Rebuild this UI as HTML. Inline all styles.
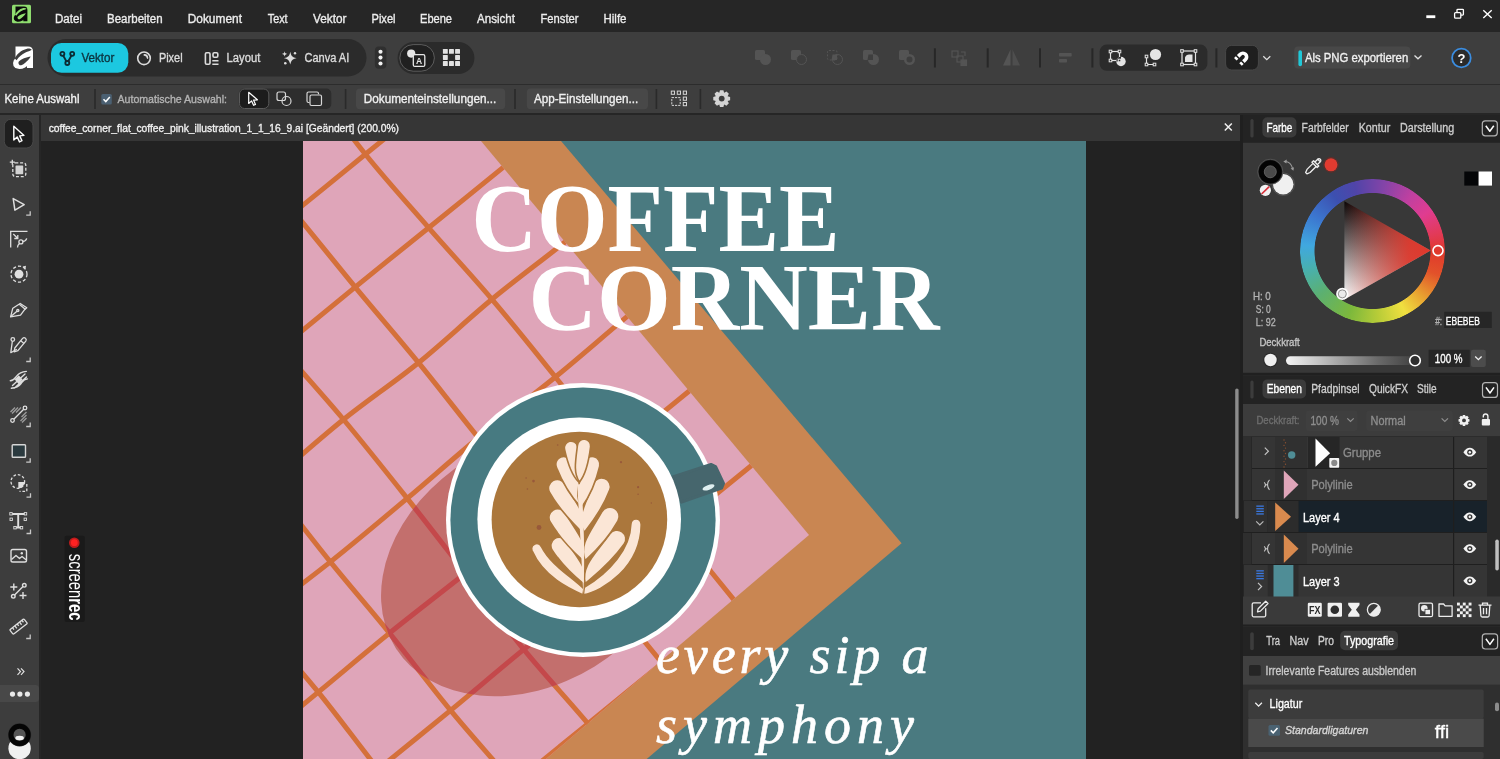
<!DOCTYPE html>
<html lang="de">
<head>
<meta charset="utf-8">
<title>coffee_corner_flat_coffee_pink_illustration</title>
<style>
*{box-sizing:border-box;margin:0;padding:0}
html,body{width:1500px;height:759px;overflow:hidden;background:#222;}
body{position:relative;font-family:"Liberation Sans","DejaVu Sans",sans-serif;font-size:12px;color:#e6e6e6;-webkit-font-smoothing:antialiased}
.abs{position:absolute}
svg{position:absolute;overflow:visible;will-change:transform}
.t{position:absolute;white-space:nowrap;line-height:1}
/* frames */
#menubar{left:0;top:0;width:1500px;height:32px;background:#262626}
#toolbar{left:0;top:32px;width:1500px;height:52px;background:#3e3e3e}
#ctxbar{left:0;top:84px;width:1500px;height:30px;background:#3e3e3e;border-top:1.5px solid #2c2c2c}
#ctxline{left:0;top:113px;width:1500px;height:2px;background:#262626}
#tools{left:0;top:115px;width:39px;height:644px;background:#3d3d3d}
#toolsline{left:39px;top:115px;width:2px;height:644px;background:#262626}
#tabbar{left:41px;top:115px;width:1199px;height:26px;background:#363636}
#canvas{left:41px;top:141px;width:1199px;height:618px;background:#222}
#rightline{left:1240px;top:115px;width:3px;height:644px;background:#1f1f1f}
#right{left:1243px;top:115px;width:257px;height:644px;background:#383838}
</style>
</head>
<body>
<div id="menubar" class="abs"></div>
<div id="toolbar" class="abs"></div>
<div id="ctxbar" class="abs"></div>
<div id="ctxline" class="abs"></div>
<div id="tools" class="abs"></div>
<div id="toolsline" class="abs"></div>
<div id="tabbar" class="abs"></div>
<div id="canvas" class="abs"></div>
<div id="rightline" class="abs"></div>
<div id="right" class="abs"></div>

<!-- ARTWORK -->
<svg id="art" class="abs" style="left:303px;top:141px" width="783" height="618" viewBox="303 141 783 618">
<defs>
<clipPath id="ab"><rect x="303" y="141" width="783" height="618"/></clipPath>
<clipPath id="pinkclip"><polygon points="303,141 481,141 809,535 546,759 303,759"/></clipPath>
<clipPath id="shclip"><ellipse cx="531" cy="563.4" rx="159.6" ry="121.1" transform="rotate(-31.7 531 563.4)"/></clipPath>
<g id="gl">
<path d="M242.7 754.6 C252.9 767.1 293.8 817.2 304.0 829.7"/>
<path d="M255.6 619.0 C266.1 631.2 297.9 667.0 318.3 692.1 C338.7 717.2 358.0 743.9 378.2 769.3 C398.4 794.7 429.3 831.9 439.5 844.5"/>
<path d="M207.2 408.2 C217.4 420.8 248.0 457.8 268.5 483.4 C289.1 509.0 310.2 536.9 330.4 561.9 C350.6 586.9 369.5 608.4 389.5 633.1 C409.5 657.9 429.9 685.2 450.6 710.4 C471.3 735.6 493.0 759.2 513.8 784.0 C534.5 808.8 564.9 846.7 575.1 859.2"/>
<path d="M220.1 272.7 C230.3 285.2 260.9 323.3 281.4 347.8 C302.0 372.3 322.5 394.4 343.5 419.5 C364.5 444.6 386.9 472.8 407.2 498.4 C427.5 524.0 445.9 548.1 465.4 573.3 C484.8 598.5 503.4 624.3 523.8 649.4 C544.2 674.5 567.1 698.7 588.0 723.6 C608.9 748.5 639.1 786.3 649.3 798.8"/>
<path d="M233.0 137.1 C243.2 149.6 274.0 187.2 294.3 212.2 C314.7 237.2 334.5 262.0 355.2 287.1 C375.9 312.2 398.0 337.6 418.5 362.7 C439.0 387.8 458.1 412.7 478.3 437.7 C498.4 462.8 519.1 487.8 539.6 512.9 C560.0 537.9 580.5 563.0 600.9 588.0 C621.3 613.1 641.8 638.1 662.2 663.2 C682.6 688.3 703.1 713.3 723.5 738.4 C743.9 763.4 774.6 801.0 784.8 813.5"/>
<path d="M307.2 76.7 C316.9 89.6 345.2 129.1 365.4 154.3 C385.6 179.5 407.6 203.6 428.7 227.8 C449.8 252.0 470.9 274.4 492.0 299.3 C513.1 324.2 535.1 351.5 555.4 377.0 C575.7 402.5 593.8 427.4 613.8 452.5 C633.8 477.6 654.7 502.6 675.1 527.6 C695.5 552.7 716.0 577.7 736.4 602.8 C756.9 627.8 777.3 652.9 797.7 677.9 C818.2 703.0 848.8 740.6 859.0 753.1"/>
<path d="M233.0 137.1 C245.4 127.0 294.9 86.7 307.2 76.7"/>
<path d="M220.1 272.7 C232.5 262.6 270.1 232.0 294.3 212.2 C318.6 192.5 340.7 174.4 365.4 154.3 C390.1 134.2 429.9 101.9 442.8 91.4"/>
<path d="M207.2 408.2 C219.6 398.2 256.8 368.0 281.4 347.8 C306.1 327.6 330.7 307.1 355.2 287.1 C379.7 267.1 403.9 247.9 428.7 227.8 C453.5 207.7 479.2 186.8 504.1 166.6 C529.0 146.3 553.6 126.3 578.3 106.1 C603.0 86.0 640.2 55.8 652.5 45.7"/>
<path d="M268.5 483.4 C281.0 472.8 318.5 439.6 343.5 419.5 C368.5 399.4 393.8 382.7 418.5 362.7 C443.2 342.7 467.5 319.5 492.0 299.3 C516.5 279.1 540.8 261.4 565.4 241.7 C590.0 222.1 614.9 201.4 639.6 181.3 C664.4 161.2 701.5 130.9 713.8 120.9"/>
<path d="M255.6 619.0 C268.1 609.5 305.1 582.0 330.4 561.9 C355.7 541.8 382.6 519.1 407.2 498.4 C431.8 477.7 453.6 458.0 478.3 437.7 C503.0 417.5 530.7 397.1 555.4 377.0 C580.1 356.9 602.5 337.0 626.7 316.9 C651.0 296.8 676.2 276.6 700.9 256.5 C725.7 236.3 762.8 206.1 775.1 196.0"/>
<path d="M242.7 754.6 C255.3 744.1 293.8 712.3 318.3 692.1 C342.8 671.9 365.0 652.9 389.5 633.1 C414.0 613.3 440.3 593.3 465.4 573.3 C490.4 553.3 514.8 533.0 539.6 512.9 C564.3 492.7 589.1 472.6 613.8 452.5 C638.5 432.3 663.3 412.2 688.0 392.0 C712.8 371.9 737.5 351.8 762.2 331.6 C787.0 311.5 824.1 281.3 836.5 271.2"/>
<path d="M304.0 829.7 C316.4 819.6 353.8 789.2 378.2 769.3 C402.7 749.4 426.3 730.4 450.6 710.4 C474.9 690.4 498.8 669.8 523.8 649.4 C548.8 629.0 575.7 608.3 600.9 588.0 C626.1 567.7 650.4 547.8 675.1 527.6 C699.9 507.5 724.6 487.3 749.3 467.2 C774.1 447.1 798.8 426.9 823.5 406.8 C848.3 386.6 885.4 356.4 897.8 346.4"/>
<path d="M439.5 844.5 C451.9 834.4 489.0 804.2 513.8 784.0 C538.5 763.9 563.2 743.8 588.0 723.6 C612.7 703.5 637.5 683.3 662.2 663.2 C686.9 643.1 711.7 622.9 736.4 602.8 C761.2 582.6 785.9 562.5 810.6 542.4 C835.4 522.2 872.5 492.0 884.9 481.9"/>
<path d="M575.1 859.2 C587.4 849.1 624.5 818.9 649.3 798.8 C674.0 778.6 698.8 758.5 723.5 738.4 C748.2 718.2 773.0 698.1 797.7 677.9 C822.5 657.8 859.6 627.6 872.0 617.5"/>
<path d="M784.8 813.5 C797.2 803.5 846.7 763.2 859.0 753.1"/>
</g>
</defs>
<g clip-path="url(#ab)">
<rect x="303" y="141" width="783" height="618" fill="#4a7a80"/>
<polygon points="303,141 561,141 901.6,543.3 646.7,759 303,759" fill="#c98652"/>
<polygon points="303,141 481,141 809,535 546,759 303,759" fill="#dfa5b9"/>
<g id="grid" clip-path="url(#pinkclip)" stroke="#d4703a" stroke-width="5" stroke-linecap="round" fill="none"><use href="#gl"/></g>
<g id="cup">
<ellipse cx="531" cy="563.4" rx="159.6" ry="121.1" transform="rotate(-31.7 531 563.4)" fill="#c36f6d"/>
<g clip-path="url(#pinkclip)"><g clip-path="url(#shclip)" stroke="#c4484b" stroke-width="5" stroke-linecap="round" fill="none"><use href="#gl"/></g></g>
<circle cx="583" cy="520" r="137" fill="#fff"/>
<circle cx="583" cy="520" r="132.6" fill="#477a81"/>
<polygon points="672.7,476.9 711,464.4 715.5,466.5 723.5,483.5 721.6,488.2 681.6,502.2" fill="#46666d" stroke="#46666d" stroke-width="3" stroke-linejoin="round"/>
<ellipse cx="708.5" cy="487.4" rx="6.3" ry="2.4" transform="rotate(-20 708.5 487.4)" fill="#dfeff0"/>
<circle cx="579.2" cy="519.2" r="101.8" fill="#fff"/>
<circle cx="579.4" cy="519.5" r="87.8" fill="#ab773c"/>
<g fill="#fbe6d6" stroke="#ab773c" stroke-width="1.6" stroke-linejoin="round">
<path d="M 583.3 594.9 C 569.6 588.7 543.5 576.9 532.1 550.8 C 529.7 543.7 538.7 540.8 541.6 547.0 C 550.6 565.0 572.0 576.9 583.8 588.7 Z"/>
<path d="M 583.3 594.9 C 602.8 591.1 640.8 567.4 641.2 524.7 C 640.8 517.1 631.3 517.1 630.8 524.7 C 630.3 548.4 609.9 572.1 584.3 587.3 Z"/>
<path d="M584.3 584.5 C589.3 569.1 577.4 558.6 566.1 541.0 C563.6 537.2 558.5 536.1 554.6 538.6 C550.8 541.1 549.7 546.2 552.2 550.1 C563.5 567.6 576.0 577.7 584.3 584.5Z"/>
<path d="M585.2 583.5 C594.6 575.4 609.9 564.1 624.2 544.0 C627.0 540.1 626.1 534.6 622.1 531.8 C618.2 528.9 612.7 529.9 609.9 533.8 C595.6 553.9 581.0 565.7 585.2 583.5Z"/>
<path d="M583.8 561.4 C589.6 544.9 577.0 532.8 565.3 513.1 C562.8 508.9 557.4 507.5 553.2 510.0 C549.1 512.5 547.7 517.9 550.2 522.0 C561.9 541.8 575.3 553.4 583.8 561.4Z"/>
<path d="M585.2 560.7 C593.9 552.8 606.9 540.8 618.0 520.9 C620.5 516.4 618.9 510.8 614.4 508.3 C610.0 505.8 604.3 507.4 601.8 511.9 C590.7 531.8 578.6 544.2 585.2 560.7Z"/>
<path d="M582.9 533.0 C589.0 516.4 576.4 503.9 564.9 483.8 C562.5 479.6 557.1 478.1 552.9 480.5 C548.7 482.9 547.2 488.3 549.6 492.5 C561.1 512.7 574.5 524.7 582.9 533.0Z"/>
<path d="M584.3 532.3 C591.3 523.5 602.0 510.3 609.8 489.8 C611.5 485.3 609.3 480.2 604.7 478.5 C600.2 476.8 595.1 479.0 593.4 483.6 C585.6 504.1 575.8 517.5 584.3 532.3Z"/>
<path d="M580.5 506.9 C587.1 493.4 578.5 480.6 570.9 461.5 C569.3 457.5 564.8 455.5 560.8 457.1 C556.7 458.7 554.8 463.3 556.4 467.3 C563.9 486.4 573.3 498.9 580.5 506.9Z"/>
<path d="M581.9 506.9 C588.0 498.4 595.1 485.3 599.7 466.2 C600.7 462.0 598.2 457.8 594.0 456.8 C589.7 455.8 585.5 458.4 584.5 462.6 C579.9 481.7 573.5 495.0 581.9 506.9Z"/>
<path d="M578.6 482.0 C584.1 472.8 580.9 461.7 577.5 446.3 C576.7 442.8 573.1 440.5 569.6 441.3 C566.0 442.1 563.7 445.6 564.5 449.2 C567.9 464.6 571.8 475.6 578.6 482.0Z"/>
<path d="M579.5 482.0 C585.7 474.7 588.6 462.9 590.6 446.7 C591.1 443.1 588.5 439.7 584.9 439.3 C581.2 438.8 577.9 441.4 577.5 445.1 C575.4 461.3 573.2 473.1 579.5 482.0Z"/>
<path d="M 577.2 484.3 C 579.5 519.9 581.4 557.9 583.3 594.0 C 585.2 557.9 583.8 519.9 581.4 484.3 Z" stroke="none"/>
</g>
<g fill="#98593a">
<circle cx="557.7" cy="445.0" r="0.8"/>
<circle cx="621.0" cy="462.2" r="1.1"/>
<circle cx="526.1" cy="478.0" r="0.8"/>
<circle cx="533.5" cy="481.1" r="1.3"/>
<circle cx="527.4" cy="489.0" r="0.8"/>
<circle cx="638.1" cy="487.2" r="1.1"/>
<circle cx="638.1" cy="494.3" r="0.8"/>
<circle cx="651.3" cy="503.0" r="0.7"/>
<circle cx="539.0" cy="527.5" r="2.4"/>
</g>
</g>
<!--/cup-->
<!--text-->
<g fill="#fff" font-family="'Liberation Serif','DejaVu Serif',serif">
<text id="t1" x="471.6" y="250.7" font-size="98" font-weight="bold" textLength="367.8" lengthAdjust="spacingAndGlyphs">COFFEE</text>
<text id="t2" x="528.4" y="329.5" font-size="95.500" font-weight="bold" textLength="411" lengthAdjust="spacingAndGlyphs">CORNER</text>
<text id="t3" x="656" y="673.3" font-size="54" font-style="italic" stroke="#fff" stroke-width=".6" textLength="272.5" lengthAdjust="spacing">every sip a</text>
<text id="t4" x="656" y="742.7" font-size="54" font-style="italic" stroke="#fff" stroke-width=".6" textLength="258" lengthAdjust="spacing">symphony</text>
</g>
<!--/text-->
</g>
</svg>
<!-- TOP BARS -->
<svg id="top" class="abs" style="left:0;top:0" width="1500" height="115" viewBox="0 0 1500 115" font-family="'Liberation Sans','DejaVu Sans',sans-serif">
<rect x="12.0" y="4.8" width="19.0" height="18.4" fill="#8fdd6f" rx="1.5" />
<g transform="translate(13.8 6.2) scale(0.68)"><path d="M2.500 .5H15Q20 .5 20 5.500V22H14V14L2.500 11.500Z" fill="#0a0a0a"/><ellipse cx="9" cy="15.500" rx="9.600" ry="6.700" transform="rotate(-28 9 15.500)" fill="#0a0a0a"/><path d="M1.800 12.600C3.500 8.500 8 4 14 2.700C16 2.300 17.700 2.800 18.800 3.800C17.500 5.200 14.500 5.500 12.500 6.400C9 8 5.800 10.800 3.600 14.200Z" fill="#8fdd6f"/><path d="M17.700 10.500C13.500 10.900 8 13.200 5.800 15.600a2.400 2.400 0 0 0 3 3.500C12 17.600 16 13.500 17.700 10.500Z" fill="#8fdd6f"/></g>
<text x="55.0" y="22.6" font-size="12.5" fill="#ececec" textLength="27.0" lengthAdjust="spacingAndGlyphs" stroke="#ececec" stroke-width="0.35" >Datei</text>
<text x="107.0" y="22.6" font-size="12.5" fill="#ececec" textLength="55.6" lengthAdjust="spacingAndGlyphs" stroke="#ececec" stroke-width="0.35" >Bearbeiten</text>
<text x="187.7" y="22.6" font-size="12.5" fill="#ececec" textLength="54.3" lengthAdjust="spacingAndGlyphs" stroke="#ececec" stroke-width="0.35" >Dokument</text>
<text x="267.8" y="22.6" font-size="12.5" fill="#ececec" textLength="19.8" lengthAdjust="spacingAndGlyphs" stroke="#ececec" stroke-width="0.35" >Text</text>
<text x="313.0" y="22.6" font-size="12.5" fill="#ececec" textLength="33.5" lengthAdjust="spacingAndGlyphs" stroke="#ececec" stroke-width="0.35" >Vektor</text>
<text x="371.5" y="22.6" font-size="12.5" fill="#ececec" textLength="24.0" lengthAdjust="spacingAndGlyphs" stroke="#ececec" stroke-width="0.35" >Pixel</text>
<text x="420.0" y="22.6" font-size="12.5" fill="#ececec" textLength="32.0" lengthAdjust="spacingAndGlyphs" stroke="#ececec" stroke-width="0.35" >Ebene</text>
<text x="477.0" y="22.6" font-size="12.5" fill="#ececec" textLength="38.0" lengthAdjust="spacingAndGlyphs" stroke="#ececec" stroke-width="0.35" >Ansicht</text>
<text x="540.5" y="22.6" font-size="12.5" fill="#ececec" textLength="38.0" lengthAdjust="spacingAndGlyphs" stroke="#ececec" stroke-width="0.35" >Fenster</text>
<text x="603.5" y="22.6" font-size="12.5" fill="#ececec" textLength="23.0" lengthAdjust="spacingAndGlyphs" stroke="#ececec" stroke-width="0.35" >Hilfe</text>
<rect x="1426.3" y="15.3" width="9.0" height="2.8" fill="#fff" />
<g fill="none" stroke="#fff" stroke-width="1.3"><rect x="1454.6" y="12.6" width="6.2" height="5.6" rx="1"/><path d="M1457 12.300v-2.200a.8.8 0 0 1 .8-.8h4.800a.8.8 0 0 1 .8.800v4.200a.8.8 0 0 1-.8.800h-1.600"/></g>
<path d="M1483.300 10.200l8.400 7.800M1491.700 10.200l-8.400 7.800" stroke="#fff" stroke-width="1.400" fill="none"/>
<g transform="translate(13 46) scale(1)"><path d="M2.500 .5H15Q20 .5 20 5.500V22H14V14L2.500 11.500Z" fill="#fff"/><ellipse cx="9" cy="15.500" rx="9.600" ry="6.700" transform="rotate(-28 9 15.500)" fill="#fff"/><path d="M1.800 12.600C3.500 8.500 8 4 14 2.700C16 2.300 17.700 2.800 18.800 3.800C17.500 5.200 14.500 5.500 12.500 6.400C9 8 5.800 10.800 3.600 14.200Z" fill="#3e3e3e"/><path d="M17.700 10.500C13.500 10.900 8 13.200 5.800 15.600a2.400 2.400 0 0 0 3 3.500C12 17.600 16 13.500 17.700 10.500Z" fill="#3e3e3e"/></g>
<rect x="47.5" y="39.0" width="319.0" height="37.5" fill="#2b2b2b" rx="18.7" />
<rect x="51.0" y="43.0" width="77.3" height="29.8" fill="#1cc8e0" rx="10.5" stroke="#23262a" stroke-width="0" />
<g fill="none" stroke="#0b2c34" stroke-width="1.800" stroke-linecap="round"><circle cx="62.400" cy="53.800" r="2"/><circle cx="72.200" cy="53.800" r="2"/><circle cx="67.300" cy="63" r="2"/><path d="M63.300 55.800l3 5.400M71.300 55.800l-3 5.400"/></g>
<text x="81.4" y="62.4" font-size="12.5" fill="#0c3440" textLength="33.0" lengthAdjust="spacingAndGlyphs" stroke="#0c3440" stroke-width="0.35" >Vektor</text>
<g fill="none" stroke="#dcdcdc" stroke-width="1.600" stroke-linecap="round"><circle cx="144" cy="58.300" r="6.300"/><path d="M144.300 54.900a3.300 3.300 0 0 1 3.200 3.200"/></g>
<text x="158.9" y="62.4" font-size="12.5" fill="#dcdcdc" textLength="23.7" lengthAdjust="spacingAndGlyphs" stroke="#dcdcdc" stroke-width="0.35" >Pixel</text>
<g fill="none" stroke="#dcdcdc" stroke-width="1.600"><rect x="205.400" y="52.700" width="4.600" height="11.600" rx="1.200"/><rect x="213" y="52.700" width="4.800" height="4.600" rx="1.200"/><path d="M212.300 60.800h6.200M212.300 64.300h6.200"/></g>
<text x="226.6" y="62.4" font-size="12.5" fill="#dcdcdc" textLength="33.7" lengthAdjust="spacingAndGlyphs" stroke="#dcdcdc" stroke-width="0.35" >Layout</text>
<g fill="#dcdcdc"><path d="M290.300 51.800c.9 4.300 2 5.500 6.300 6.400-4.300.9-5.400 2.100-6.300 6.400-.9-4.300-2-5.500-6.300-6.400 4.300-.9 5.400-2.100 6.300-6.400z"/><path d="M284.600 51.200c.4 1.800.9 2.300 2.700 2.700-1.800.4-2.300.9-2.700 2.700-.4-1.800-.9-2.300-2.700-2.700 1.800-.4 2.300-.9 2.700-2.700z"/><circle cx="295" cy="53.300" r="1.200"/><circle cx="285.300" cy="63.200" r="1.300"/></g>
<text x="304.5" y="62.4" font-size="12.5" fill="#dcdcdc" textLength="44.8" lengthAdjust="spacingAndGlyphs" stroke="#dcdcdc" stroke-width="0.35" >Canva AI</text>
<rect x="374.9" y="46.4" width="11.5" height="22.4" fill="#2f2f2f" rx="4" />
<circle cx="380.500" cy="51.7" r="2.050" fill="#f2f2f2"/>
<circle cx="380.500" cy="57.6" r="2.050" fill="#f2f2f2"/>
<circle cx="380.500" cy="63.5" r="2.050" fill="#f2f2f2"/>
<rect x="397.6" y="42.0" width="76.8" height="32.0" fill="#2b2b2b" rx="16" />
<rect x="399.8" y="44.6" width="34.6" height="26.6" fill="#202020" rx="13.3" stroke="#5c5c5c" stroke-width="1" />
<circle cx="411.200" cy="53.600" r="4.100" fill="#e6e6e6"/><rect x="413.300" y="54.700" width="11.500" height="11.700" rx="1.500" fill="#202020" stroke="#e6e6e6" stroke-width="1.300"/>
<text x="419.050" y="64.300" font-size="8.500" font-weight="bold" fill="#e6e6e6" text-anchor="middle">A</text>
<g fill="#e2e2e2"><rect x="442.9" y="48.9" width="4.900" height="4.900" rx=".6"/><rect x="449.0" y="48.9" width="4.900" height="4.900" rx=".6"/><rect x="455.1" y="48.9" width="4.900" height="4.900" rx=".6"/><rect x="442.9" y="55.0" width="4.900" height="4.900" rx=".6"/><rect x="455.1" y="55.0" width="4.900" height="4.900" rx=".6"/><rect x="442.9" y="61.1" width="4.900" height="4.900" rx=".6"/><rect x="449.0" y="61.1" width="4.900" height="4.900" rx=".6"/><rect x="455.1" y="61.1" width="4.900" height="4.900" rx=".6"/></g>
<g fill="#545454" stroke="none"><rect x="755.0" y="50" width="10" height="10" rx="1.5"/><circle cx="765.5" cy="59.500" r="5.500"/></g>
<g fill="#545454" stroke="none"><rect x="791.0" y="50" width="10" height="10" rx="1.500"/><circle cx="801.5" cy="59.500" r="5" fill="#3e3e3e" stroke="#545454" stroke-width="1"/></g>
<g fill="#545454" stroke="none"><rect x="827.5" y="50.500" width="9.500" height="9.500" rx="1.500" fill="none" stroke="#545454" stroke-dasharray="2 1.500"/><circle cx="837.5" cy="59.500" r="5" fill="none" stroke="#545454"/><path d="M832.5 54.500h4.500v5.500h-5.500z"/></g>
<g fill="#545454" stroke="none"><rect x="863.0" y="50" width="10" height="10" rx="1.500"/><circle cx="873.5" cy="59.500" r="5.500"/><path d="M868.5 54.500h4.500v5.500h-5.500z" fill="#3e3e3e"/></g>
<g fill="#545454" stroke="none"><rect x="899.0" y="50" width="10" height="10" rx="1.500"/><circle cx="909.5" cy="59.500" r="5.500"/><circle cx="909.5" cy="59.500" r="3" fill="#3e3e3e"/></g>
<rect x="933.9" y="48.3" width="2.0" height="19.2" fill="#272727" />
<rect x="986.7" y="48.3" width="2.0" height="19.2" fill="#272727" />
<rect x="1039.0" y="48.3" width="2.0" height="19.2" fill="#272727" />
<rect x="1091.4" y="48.3" width="2.0" height="19.2" fill="#272727" />
<rect x="1215.4" y="48.3" width="2.0" height="19.2" fill="#272727" />
<g fill="none" stroke="#545454" stroke-width="1.200"><rect x="952" y="51" width="6" height="6"/><rect x="957" y="56" width="6" height="6"/><rect x="961" y="60" width="5.500" height="5.500" fill="#545454"/><path d="M961 52h4v4"/></g>
<g fill="#545454"><path d="M1010.500 49.500v16h-7.500z"/><path d="M1012.500 49.500v16h7.500z" opacity=".75"/></g>
<g fill="#545454"><rect x="1059" y="53" width="12.700" height="3.600" rx=".8"/><rect x="1059" y="59" width="8" height="3.600" rx=".8"/></g>
<rect x="1099.6" y="44.6" width="107.8" height="26.2" fill="#2b2b2b" rx="7" />
<g fill="none" stroke="#e4e4e4" stroke-width="1.200"><rect x="1110.500" y="51.500" width="9" height="9"/><circle cx="1121" cy="61.500" r="4.700" fill="#e4e4e4" stroke="none"/><path d="M1121 61.500v-4.700a4.700 4.700 0 0 0-4.700 4.700z" fill="#2b2b2b" stroke="none"/></g>
<rect x="1109.2" y="50.2" width="2.600" height="2.600" fill="#2b2b2b" stroke="#e4e4e4" stroke-width="1"/>
<rect x="1118.2" y="50.2" width="2.600" height="2.600" fill="#2b2b2b" stroke="#e4e4e4" stroke-width="1"/>
<rect x="1109.2" y="59.2" width="2.600" height="2.600" fill="#2b2b2b" stroke="#e4e4e4" stroke-width="1"/>
<rect x="1118.2" y="59.2" width="2.600" height="2.600" fill="#2b2b2b" stroke="#e4e4e4" stroke-width="1"/>
<circle cx="1155.500" cy="54.500" r="5.600" fill="#e4e4e4"/><path d="M1146.500 56.500v8h8" fill="none" stroke="#e4e4e4" stroke-width="1.200"/>
<rect x="1145.2" y="55.2" width="2.600" height="2.600" fill="#2b2b2b" stroke="#e4e4e4" stroke-width="1"/>
<rect x="1145.2" y="63.2" width="2.600" height="2.600" fill="#2b2b2b" stroke="#e4e4e4" stroke-width="1"/>
<rect x="1153.2" y="63.2" width="2.600" height="2.600" fill="#2b2b2b" stroke="#e4e4e4" stroke-width="1"/>
<rect x="1182" y="51" width="13.500" height="13.500" fill="none" stroke="#e4e4e4" stroke-width="1.200"/><path d="M1185 62v-4.500a4.500 4.500 0 0 1 4.500-3h3v7.500z" fill="#e4e4e4"/>
<rect x="1180.7" y="49.7" width="2.600" height="2.600" fill="#2b2b2b" stroke="#e4e4e4" stroke-width="1"/>
<rect x="1194.2" y="49.7" width="2.600" height="2.600" fill="#2b2b2b" stroke="#e4e4e4" stroke-width="1"/>
<rect x="1180.7" y="63.2" width="2.600" height="2.600" fill="#2b2b2b" stroke="#e4e4e4" stroke-width="1"/>
<rect x="1194.2" y="63.2" width="2.600" height="2.600" fill="#2b2b2b" stroke="#e4e4e4" stroke-width="1"/>
<rect x="1225.6" y="45.4" width="32.8" height="24.6" fill="#1f1f1f" rx="6" stroke="#474747" stroke-width="1" />
<g transform="rotate(45 1242 57.800)"><path d="M1236.500 59.500v-3a5.500 5.500 0 0 1 11 0v3h-3.600v-3a1.900 1.900 0 0 0-3.800 0v3z" fill="#fff"/><path d="M1236.500 61h3.600v2.600h-3.600zM1243.900 61h3.600v2.600h-3.600z" fill="#fff"/></g>
<path d="M1263.300 56.300l3.500 3.300 3.500-3.300" fill="none" stroke="#e0e0e0" stroke-width="1.300"/>
<rect x="1294.2" y="46.6" width="116.2" height="22.0" fill="#484848" rx="4" />
<rect x="1298.4" y="50.2" width="3.6" height="16.0" fill="#20c8d8" rx="1.8" />
<text x="1304.9" y="62.2" font-size="12.5" fill="#f0f0f0" textLength="103.3" lengthAdjust="spacingAndGlyphs" stroke="#f0f0f0" stroke-width="0.35" >Als PNG exportieren</text>
<path d="M1414.500 55.500l3.500 3.300 3.500-3.300" fill="none" stroke="#e0e0e0" stroke-width="1.300"/>
<circle cx="1461.400" cy="58" r="9.300" fill="#2b2b2b" stroke="#3b8de0" stroke-width="1.800"/>
<text x="1461.400" y="62.600" font-size="13" font-weight="bold" fill="#fff" text-anchor="middle">?</text>
<text x="4.5" y="103.0" font-size="12.5" fill="#f2f2f2" textLength="75.0" lengthAdjust="spacingAndGlyphs" stroke="#f2f2f2" stroke-width="0.35" >Keine Auswahl</text>
<rect x="94.2" y="89.0" width="1.6" height="20.0" fill="#2a2a2a" />
<rect x="344.8" y="89.0" width="1.6" height="20.0" fill="#2a2a2a" />
<rect x="514.2" y="89.0" width="1.6" height="20.0" fill="#2a2a2a" />
<rect x="655.6" y="89.0" width="1.6" height="20.0" fill="#2a2a2a" />
<rect x="699.6" y="89.0" width="1.6" height="20.0" fill="#2a2a2a" />
<rect x="101.3" y="94.0" width="10.5" height="10.5" fill="#4b6072" rx="1.5" />
<path d="M103.500 99.300l2.300 2.300 4-4.500" fill="none" stroke="#fff" stroke-width="1.500"/>
<text x="117.5" y="103.0" font-size="11.5" fill="#b4b4b4" textLength="109.5" lengthAdjust="spacingAndGlyphs" stroke="#b4b4b4" stroke-width="0.35" >Automatische Auswahl:</text>
<rect x="238.8" y="88.5" width="92.5" height="20.5" fill="#2d2d2d" rx="5" />
<rect x="239.5" y="89.0" width="29.3" height="19.5" fill="#1c1c1c" rx="5" stroke="#5a5a5a" stroke-width="1" />
<path d="M248.700 92.300v11.200l2.900-2.600 2 4.400 1.900-.9-2-4.300 3.900-.3z" fill="none" stroke="#fff" stroke-width="1.200" stroke-linejoin="round"/>
<g fill="none" stroke="#d8d8d8" stroke-width="1.200"><rect x="277" y="92" width="8.500" height="8.500" rx="2"/><circle cx="286.500" cy="101" r="4.500"/></g>
<g fill="none" stroke="#d8d8d8" stroke-width="1.200"><path d="M309.500 102.500h-1a1.500 1.500 0 0 1-1.500-1.500v-7.500a1.500 1.500 0 0 1 1.500-1.500h8.500a1.500 1.500 0 0 1 1.500 1.500v.8"/><rect x="310" y="95" width="11.500" height="10.500" rx="1.500"/></g>
<rect x="356.0" y="88.4" width="149.2" height="20.8" fill="#484848" rx="4" />
<text x="363.8" y="103.2" font-size="12.5" fill="#f0f0f0" textLength="132.5" lengthAdjust="spacingAndGlyphs" stroke="#f0f0f0" stroke-width="0.35" >Dokumenteinstellungen...</text>
<rect x="526.8" y="88.4" width="121.2" height="20.8" fill="#484848" rx="4" />
<text x="534.0" y="103.2" font-size="12.5" fill="#f0f0f0" textLength="104.2" lengthAdjust="spacingAndGlyphs" stroke="#f0f0f0" stroke-width="0.35" >App-Einstellungen...</text>
<g fill="none" stroke="#d4d4d4" stroke-width="1"><rect x="671.3" y="91.1" width="3.200" height="3.200"/><rect x="677.3" y="91.1" width="3.200" height="3.200"/><rect x="683.3" y="91.1" width="3.200" height="3.200"/><rect x="683.3" y="97.1" width="3.200" height="3.200"/><rect x="683.3" y="102.5" width="3.200" height="3.200"/><rect x="671.800" y="97.600" width="8.400" height="7.800" stroke-dasharray="2.200 1"/></g>
<path d="M730.13 96.89L730.13 100.31L727.62 101.03L727.61 101.07L728.87 103.35L726.45 105.77L724.17 104.51L724.13 104.52L723.41 107.03L719.99 107.03L719.27 104.52L719.23 104.51L716.95 105.77L714.53 103.35L715.79 101.07L715.78 101.03L713.27 100.31L713.27 96.89L715.78 96.17L715.79 96.13L714.53 93.85L716.95 91.43L719.23 92.69L719.27 92.68L719.99 90.17L723.41 90.17L724.13 92.68L724.17 92.69L726.45 91.43L728.87 93.85L727.61 96.13L727.62 96.17Z" fill="#d4d4d4"/><circle cx="721.7" cy="98.6" r="2.900" fill="#3e3e3e"/>
</svg>
<!-- LEFT TOOLS -->
<svg id="left" class="abs" style="left:0;top:115px" width="120" height="644" viewBox="0 115 120 644" font-family="'Liberation Sans','DejaVu Sans',sans-serif">
<rect x="4.3" y="119.3" width="28.7" height="28.7" fill="#1f1f1f" rx="6.5" stroke="#484848" stroke-width="1" />
<path d="M13.800 126.200v13.900l3.400-3.200 2.300 5 2.500-1.200-2.300-4.800 4.300-.5z" fill="none" stroke="#fff" stroke-width="1.400" stroke-linejoin="round"/>
<rect x="12.800" y="162.800" width="13" height="13.800" rx="2.500" fill="none" stroke="#dedede" stroke-width="1.300" stroke-dasharray="3 1.800"/>
<rect x="15.500" y="165.600" width="7.700" height="8.600" rx=".8" fill="#d4d4d4"/>
<path d="M9.800 162.200h5M12.300 159.700v5" stroke="#dedede" stroke-width="1.300" fill="none"/>
<path d="M13.200 198.600l11 6-9.300 5.600z" fill="none" stroke="#dedede" stroke-width="1.500" stroke-linejoin="round"/>
<path d="M30.2 211.2v4h-4" fill="none" stroke="#c8c8c8" stroke-width="1.300"/>
<g fill="none" stroke="#dedede" stroke-width="1.300"><path d="M10 231.300h17.500M10.700 231.300v16.200"/><path d="M13.300 234l4.300 4.300M17.800 235v3.500h-3.500"/><circle cx="20.900" cy="241.900" r="2"/><path d="M22.900 241.500c2-.2 3.300-1.300 3.800-3.200M19.500 243.500c-1.400 1-2 2.300-2 4"/></g>
<circle cx="19" cy="274.200" r="8" fill="none" stroke="#dedede" stroke-width="1.300" stroke-dasharray="3.200 2"/>
<circle cx="19" cy="274.200" r="4.400" fill="#e0e0e0"/><path d="M22.600 266.400l3.400-.6-.6 3.600z" fill="#dedede"/>
<g fill="none" stroke="#dedede" stroke-width="1.300" stroke-linejoin="round"><path d="M10.600 316.800l2.200-8.600 7.400-4.700 6.600 4.200-1.800 1.500-4.500 6z"/><path d="M10.800 316.600l6.200-5.400"/><circle cx="17.800" cy="310.600" r="1.100"/><path d="M19.300 304.200l6.200 5.200"/></g>
<g fill="none" stroke="#dedede" stroke-width="1.300" stroke-linejoin="round"><circle cx="12.800" cy="339.500" r="1.800"/><path d="M12.300 341.500l-1.500 11.200 6-3.500"/><path d="M14.800 348l7.800-9.600a2.100 2.100 0 0 1 3.200 2.700l-7.900 9.500-3.800 1.200z"/><path d="M20.800 340.700l3.200 2.700"/></g>
<path d="M30.2 357.5v4h-4" fill="none" stroke="#c8c8c8" stroke-width="1.300"/>
<g fill="none" stroke="#dedede" stroke-width="1.400" stroke-linecap="round"><path d="M10.300 380.800c3.800-.4 4.800-2.600 6.300-4.600s4-4.300 9.800-4.800M11.300 388.300c5.800-.5 8.300-2.800 9.800-4.800s2.500-4.200 6.300-4.600M12.500 385.500l12.500-11.500M14.500 388l12-11"/></g><path d="M18.700 375.300l3.900 4.300-3.900 4.600-3.900-4.600z" fill="#dedede"/>
<g stroke="#dedede" stroke-width="1.300" fill="none"><circle cx="12.500" cy="420.500" r="1.800"/><circle cx="25" cy="408" r="1.800"/><path d="M13.800 419.200l9.900-9.900"/></g>
<path d="M15 407.500l-4.500 4.500M18 407.500l-6 6M21 407.500l-5 5M26.500 412l-5 5M26.500 415l-6 6M26.500 418l-4.500 4.500" stroke="#9a9a9a" stroke-width="1.400" fill="none"/>
<path d="M30.2 422.5v4h-4" fill="none" stroke="#c8c8c8" stroke-width="1.300"/>
<rect x="12.200" y="444.800" width="13.300" height="12.400" rx=".8" fill="#2b3a3f" stroke="#d6d6d6" stroke-width="1.400"/>
<path d="M30.2 458.2v4h-4" fill="none" stroke="#c8c8c8" stroke-width="1.300"/>
<g fill="none" stroke="#dedede" stroke-width="1.300"><circle cx="17.800" cy="481.500" r="6.800" stroke-dasharray="2.700 1.850"/><path d="M26.800 484v7.300h-7.300" stroke-dasharray="2.700 1.800"/></g><path d="M18.300 482h6.400a6.600 6.600 0 0 1-6.400 6.500z" fill="#e0e0e0"/>
<path d="M30.5 493.2v4h-4" fill="none" stroke="#c8c8c8" stroke-width="1.300"/>
<g fill="none" stroke="#dedede" stroke-width="1.900"><path d="M11 514h14.500M18.200 514v13.200M15 527.500h6.500"/></g>
<rect x="9.8" y="512.6" width="2.400" height="2.400" fill="#3d3d3d" stroke="#dedede" stroke-width=".9"/>
<rect x="24.3" y="512.6" width="2.400" height="2.400" fill="#3d3d3d" stroke="#dedede" stroke-width=".9"/>
<rect x="10.0" y="518.1" width="2.400" height="2.400" fill="#3d3d3d" stroke="#dedede" stroke-width=".9"/>
<rect x="24.1" y="518.1" width="2.400" height="2.400" fill="#3d3d3d" stroke="#dedede" stroke-width=".9"/>
<rect x="13.8" y="526.5" width="2.400" height="2.400" fill="#3d3d3d" stroke="#dedede" stroke-width=".9"/>
<rect x="20.3" y="526.5" width="2.400" height="2.400" fill="#3d3d3d" stroke="#dedede" stroke-width=".9"/>
<path d="M30.5 529.5v4h-4" fill="none" stroke="#c8c8c8" stroke-width="1.300"/>
<g fill="none" stroke="#dedede" stroke-width="1.400" stroke-linejoin="round"><rect x="11" y="549.500" width="15.500" height="12.500" rx="1.800"/><path d="M11.500 559.500l4.500-4 3.500 3 2.500-2 4 3.300"/></g><circle cx="21.800" cy="553.300" r="1.200" fill="#dedede"/>
<g fill="none" stroke="#dedede" stroke-width="1.400"><path d="M10.300 587h7M13.800 583.500v7M19.500 595.500h7M23 592v7"/><circle cx="13.300" cy="596.300" r="1.800"/><circle cx="24.300" cy="585.300" r="1.800"/><path d="M14.600 595l8.400-8.400"/></g>
<g transform="rotate(-38 18.500 626.500)" fill="none" stroke="#dedede" stroke-width="1.300"><rect x="9.500" y="623.700" width="18" height="5.800" rx="1"/><path d="M13 623.700v2.500M16 623.700v3.300M19 623.700v2.500M22 623.700v3.300M25 623.700v2.500"/></g>
<path d="M30.2 634.5v4h-4" fill="none" stroke="#c8c8c8" stroke-width="1.300"/>
<path d="M17.500 668.300l3 3.300-3 3.300M21 668.300l3 3.300-3 3.300" fill="none" stroke="#e0e0e0" stroke-width="1.200"/>
<path d="M0 685h35.500a3.500 3.500 0 0 1 3.500 3.500v10a3.500 3.500 0 0 1-3.500 3.500h-35.500z" fill="#484848"/>
<circle cx="12.5" cy="694.100" r="2.600" fill="#e8e8e8"/>
<circle cx="19.9" cy="694.100" r="2.600" fill="#e8e8e8"/>
<circle cx="27.4" cy="694.100" r="2.600" fill="#e8e8e8"/>
<circle cx="19.600" cy="748.200" r="11.200" fill="#f0f0f0"/>
<circle cx="19.600" cy="734.900" r="11.600" fill="#2e2e2e"/>
<circle cx="19.600" cy="734.900" r="8.600" fill="#555" stroke="#050505" stroke-width="5"/>
<ellipse cx="19.600" cy="738" rx="4.300" ry="2.200" fill="#f2f2f2"/>
<rect x="64.5" y="535.8" width="20.3" height="86.2" fill="#1a1a1a" rx="2" />
<circle cx="74.300" cy="542.700" r="5.300" fill="#c01c1c"/><circle cx="74.300" cy="542.700" r="3.400" fill="#ff2222"/>
<text transform="translate(69.400 553.800) rotate(90)" font-size="19.500" fill="#fff" textLength="66.800" lengthAdjust="spacingAndGlyphs">screen<tspan font-weight="bold">rec</tspan></text>
</svg>
<!-- TAB BAR TEXT + RIGHT PANEL -->
<div class="abs" style="left:1300.300px;top:178.800px;width:144.600px;height:144.600px;border-radius:50%;background:conic-gradient(from 90deg,#e0382c 0deg,#e2522a 20deg,#e8a030 42deg,#f0e040 62deg,#b8cc38 85deg,#7cb83c 110deg,#5cb070 140deg,#48b0b0 165deg,#40a8e0 185deg,#3c78d0 210deg,#3c50b0 235deg,#5044a8 255deg,#8444a8 280deg,#c040a0 305deg,#e03c90 325deg,#e23a58 345deg,#e0382c 360deg);-webkit-mask:radial-gradient(circle,transparent 57.600px,#000 58.400px);mask:radial-gradient(circle,transparent 57.600px,#000 58.400px)"></div>
<svg id="rightsvg" class="abs" style="left:0;top:0" width="1500" height="759" viewBox="0 0 1500 759" font-family="'Liberation Sans','DejaVu Sans',sans-serif">
<defs><linearGradient id="tv" x1="0" y1="0" x2="0" y2="1"><stop offset="0" stop-color="#0a0505"/><stop offset="1" stop-color="#ffffff"/></linearGradient><linearGradient id="th" x1="0" y1="0" x2="1" y2="0"><stop offset="0" stop-color="#e0382c" stop-opacity="0"/><stop offset=".75" stop-color="#e0382c" stop-opacity=".92"/><stop offset="1" stop-color="#e0382c"/></linearGradient>
<linearGradient id="og" x1="0" y1="0" x2="1" y2="0"><stop offset="0" stop-color="#f4f4f4"/><stop offset=".25" stop-color="#c4c4c4"/><stop offset=".7" stop-color="#6a6a6a"/><stop offset="1" stop-color="#3e3e3e"/></linearGradient></defs>
<text x="48.7" y="132.0" font-size="11.5" fill="#f0f0f0" textLength="350.3" lengthAdjust="spacingAndGlyphs" stroke="#f0f0f0" stroke-width="0.35" >coffee_corner_flat_coffee_pink_illustration_1_1_16_9.ai [Geändert] (200.0%)</text>
<path d="M1224.800 123.500l7 7M1231.800 123.500l-7 7" stroke="#f0f0f0" stroke-width="1.500" fill="none"/>
<rect x="1235.2" y="388.4" width="3.4" height="130.6" fill="#8c8c8c" rx="1.7" />
<rect x="1243.0" y="115.0" width="257.0" height="27.8" fill="#232323" />
<rect x="1250.4" y="119.0" width="3.2" height="18.5" fill="#3c3c3c" rx="1.6" />
<rect x="1262.4" y="117.2" width="34.0" height="20.3" fill="#3b3b3b" rx="5" />
<text x="1266.4" y="131.7" font-size="12.5" fill="#ffffff" textLength="25.9" lengthAdjust="spacingAndGlyphs" stroke="#ffffff" stroke-width="0.35" >Farbe</text>
<text x="1301.6" y="131.7" font-size="12.5" fill="#cdcdcd" textLength="47.0" lengthAdjust="spacingAndGlyphs" stroke="#cdcdcd" stroke-width="0.35" >Farbfelder</text>
<text x="1358.7" y="131.7" font-size="12.5" fill="#cdcdcd" textLength="31.6" lengthAdjust="spacingAndGlyphs" stroke="#cdcdcd" stroke-width="0.35" >Kontur</text>
<text x="1400.0" y="131.7" font-size="12.5" fill="#cdcdcd" textLength="54.2" lengthAdjust="spacingAndGlyphs" stroke="#cdcdcd" stroke-width="0.35" >Darstellung</text>
<rect x="1482.3" y="120.8" width="15.0" height="15.0" fill="none" rx="3" stroke="#b4b4b4" stroke-width="1.2" /><path d="M1485.8 125.7l4 5.600 4-5.600" fill="none" stroke="#fff" stroke-width="1.500" stroke-linejoin="round"/>
<circle cx="1283.200" cy="184.200" r="11.300" fill="#3a3a3a" stroke="#5a5a5a" stroke-width=".8"/><circle cx="1283.200" cy="184.200" r="10.300" fill="#f0f0f0"/>
<circle cx="1270.300" cy="171.800" r="12.600" fill="#2a2a2a" stroke="#5c5c5c" stroke-width=".8"/><circle cx="1270.300" cy="171.800" r="8.800" fill="#4a4a4a" stroke="#040404" stroke-width="5.400"/><circle cx="1270.300" cy="171.800" r="6" fill="none" stroke="#6a6a6a" stroke-width=".8"/>
<circle cx="1265.400" cy="190.300" r="5.600" fill="#f2f2f2"/><path d="M1261.600 194l7.600-7.400" stroke="#d8303a" stroke-width="1.700"/>
<path d="M1284.500 161.500c3.500-.2 7 2.500 8.300 7.500" fill="none" stroke="#9a9a9a" stroke-width="1.100"/><path d="M1283.300 161.400l3.500-1.800-.4 3.800zM1293.400 170.800l-2.800-2.200 3.400-1.400z" fill="#9a9a9a"/>
<g transform="rotate(45 1313 166.500)" fill="none" stroke="#f0f0f0" stroke-width="1.300" stroke-linejoin="round"><path d="M1311.200 158h3.600v4h-3.600zM1309.300 162h7.400v2.300h-7.400zM1310.800 164.300v8.500l1.300 3.200h1.800l1.300-3.200v-8.500"/><path d="M1311.200 158a1.800 1.800 0 0 1 3.600 0"/></g>
<circle cx="1331" cy="164.800" r="7.400" fill="none" stroke="#6c2a24" stroke-width=".8"/><circle cx="1331" cy="164.800" r="6.500" fill="#e23b30"/>
<rect x="1464.3" y="171.5" width="14.3" height="14.1" fill="#050608" />
<rect x="1478.6" y="171.5" width="13.4" height="14.1" fill="#ffffff" />
<polygon points="1344.400,201.300 1430.600,250.600 1344.400,299.600" fill="url(#tv)"/><polygon points="1344.400,201.300 1430.600,250.600 1344.400,299.600" fill="url(#th)"/>
<circle cx="1438" cy="250.600" r="5" fill="none" stroke="#fff" stroke-width="1.600"/>
<circle cx="1342.300" cy="293.900" r="5.400" fill="#ebebeb" stroke="#fff" stroke-width="1.500"/><circle cx="1342.300" cy="293.900" r="4" fill="none" stroke="#8a8a8a" stroke-width=".9"/>
<text x="1252.9" y="299.8" font-size="11.5" fill="#b2b2b2" textLength="17.9" lengthAdjust="spacingAndGlyphs" stroke="#b2b2b2" stroke-width="0.35" >H: 0</text>
<text x="1255.8" y="313.0" font-size="11.5" fill="#b2b2b2" textLength="15.0" lengthAdjust="spacingAndGlyphs" stroke="#b2b2b2" stroke-width="0.35" >S: 0</text>
<text x="1255.8" y="326.2" font-size="11.5" fill="#b2b2b2" textLength="20.0" lengthAdjust="spacingAndGlyphs" stroke="#b2b2b2" stroke-width="0.35" >L: 92</text>
<text x="1435.2" y="324.5" font-size="10.5" fill="#b2b2b2" textLength="7.0" lengthAdjust="spacingAndGlyphs" stroke="#b2b2b2" stroke-width="0.35" >#:</text>
<rect x="1444.2" y="311.8" width="47.6" height="16.2" fill="#262626" />
<text x="1445.8" y="325.1" font-size="11.5" fill="#ffffff" textLength="34.0" lengthAdjust="spacingAndGlyphs" stroke="#ffffff" stroke-width="0.35" >EBEBEB</text>
<text x="1259.4" y="345.8" font-size="11.5" fill="#c4c4c4" textLength="40.3" lengthAdjust="spacingAndGlyphs" stroke="#c4c4c4" stroke-width="0.35" >Deckkraft</text>
<circle cx="1270.500" cy="360" r="7.300" fill="#2a2a2a"/><circle cx="1270.500" cy="360" r="6.200" fill="#f0f0f0"/>
<rect x="1286.0" y="356.2" width="131.0" height="8.8" fill="url(#og)" rx="4.4" />
<circle cx="1415" cy="360.500" r="5.300" fill="#2e2e2e" stroke="#fff" stroke-width="1.600"/>
<rect x="1428.6" y="349.8" width="41.1" height="17.2" fill="#262626" />
<text x="1434.8" y="363.4" font-size="12.5" fill="#ffffff" textLength="27.8" lengthAdjust="spacingAndGlyphs" stroke="#ffffff" stroke-width="0.35" >100 %</text>
<rect x="1471.0" y="349.8" width="14.8" height="17.2" fill="#4c4c4c" rx="2" />
<path d="M1475.200 356.500l3.200 3.200 3.200-3.200" fill="none" stroke="#f0f0f0" stroke-width="1.300"/>
<rect x="1243.0" y="372.8" width="257.0" height="2.6" fill="#202020" />
</svg>
<!-- LAYERS + TYPO PANELS -->
<svg id="right2" class="abs" style="left:0;top:0" width="1500" height="759" viewBox="0 0 1500 759" font-family="'Liberation Sans','DejaVu Sans',sans-serif">
<rect x="1243.0" y="375.4" width="257.0" height="28.6" fill="#232323" />
<rect x="1250.4" y="380.5" width="3.2" height="18.0" fill="#3c3c3c" rx="1.6" />
<rect x="1262.5" y="379.4" width="43.5" height="19.0" fill="#3b3b3b" rx="5" />
<text x="1266.7" y="393.3" font-size="12.5" fill="#ffffff" textLength="35.3" lengthAdjust="spacingAndGlyphs" stroke="#ffffff" stroke-width="0.35" >Ebenen</text>
<text x="1311.2" y="393.3" font-size="12.5" fill="#cdcdcd" textLength="48.3" lengthAdjust="spacingAndGlyphs" stroke="#cdcdcd" stroke-width="0.35" >Pfadpinsel</text>
<text x="1369.0" y="393.3" font-size="12.5" fill="#cdcdcd" textLength="39.0" lengthAdjust="spacingAndGlyphs" stroke="#cdcdcd" stroke-width="0.35" >QuickFX</text>
<text x="1417.0" y="393.3" font-size="12.5" fill="#cdcdcd" textLength="19.6" lengthAdjust="spacingAndGlyphs" stroke="#cdcdcd" stroke-width="0.35" >Stile</text>
<rect x="1482.5" y="382.6" width="15.0" height="14.8" fill="none" rx="3" stroke="#b4b4b4" stroke-width="1.2" /><path d="M1486.0 387.4l4 5.600 4-5.600" fill="none" stroke="#fff" stroke-width="1.500" stroke-linejoin="round"/>
<rect x="1243.0" y="404.0" width="257.0" height="32.5" fill="#3c3c3c" />
<text x="1256.4" y="424.0" font-size="11.5" fill="#6e6e6e" textLength="43.1" lengthAdjust="spacingAndGlyphs" stroke="#6e6e6e" stroke-width="0.35" >Deckkraft:</text>
<rect x="1306.0" y="410.4" width="51.4" height="20.6" fill="#3f3f3f" rx="3" />
<text x="1310.5" y="425.2" font-size="12.5" fill="#8e8e8e" textLength="28.5" lengthAdjust="spacingAndGlyphs" stroke="#8e8e8e" stroke-width="0.35" >100 %</text>
<path d="M1347.300 418.300l3.200 3.200 3.200-3.200" fill="none" stroke="#8e8e8e" stroke-width="1.200"/>
<rect x="1366.3" y="410.4" width="86.4" height="20.6" fill="#3f3f3f" rx="3" />
<text x="1370.5" y="425.2" font-size="12.5" fill="#8e8e8e" textLength="35.2" lengthAdjust="spacingAndGlyphs" stroke="#8e8e8e" stroke-width="0.35" >Normal</text>
<path d="M1441.600 418.300l3.200 3.200 3.200-3.200" fill="none" stroke="#8e8e8e" stroke-width="1.200"/>
<path d="M1469.49 419.29L1469.49 421.51L1467.74 422.07L1467.83 421.87L1468.67 423.49L1467.09 425.07L1465.47 424.23L1465.67 424.14L1465.11 425.89L1462.89 425.89L1462.33 424.14L1462.53 424.23L1460.91 425.07L1459.33 423.49L1460.17 421.87L1460.26 422.07L1458.51 421.51L1458.51 419.29L1460.26 418.73L1460.17 418.93L1459.33 417.31L1460.91 415.73L1462.53 416.57L1462.33 416.66L1462.89 414.91L1465.11 414.91L1465.67 416.66L1465.47 416.57L1467.09 415.73L1468.67 417.31L1467.83 418.93L1467.74 418.73Z" fill="#f0f0f0"/><circle cx="1464.0" cy="420.4" r="1.900" fill="#3c3c3c"/>
<rect x="1481.800" y="419" width="8.200" height="6.600" rx="1" fill="#f0f0f0"/><path d="M1483.300 417.600v-1.300a2.300 2.300 0 0 1 4.600 0v3" fill="none" stroke="#f0f0f0" stroke-width="1.400"/>
<rect x="1243.0" y="436.5" width="257.0" height="160.5" fill="#1f1f1f" />
<rect x="1243.0" y="436.5" width="8.6" height="64.0" fill="#2e2e2e" />
<rect x="1243.0" y="533.0" width="8.6" height="31.5" fill="#2e2e2e" />
<rect x="1252.0" y="437.0" width="235.0" height="31.0" fill="#353535" />
<rect x="1275.2" y="437.0" width="31.8" height="31.0" fill="#303030" />
<rect x="1308.0" y="437.0" width="31.6" height="31.0" fill="#262626" />
<path d="M1264.800 447.600l3.600 3.600-3.600 3.600" fill="none" stroke="#c4c4c4" stroke-width="1.200"/>
<g fill="#8a5030"><circle cx="1284.0" cy="440.0" r=".7"/><circle cx="1285.5" cy="442.7" r=".7"/><circle cx="1284.0" cy="445.4" r=".7"/><circle cx="1285.5" cy="448.1" r=".7"/><circle cx="1284.0" cy="450.8" r=".7"/><circle cx="1285.5" cy="453.5" r=".7"/><circle cx="1284.0" cy="456.2" r=".7"/><circle cx="1285.5" cy="458.9" r=".7"/><circle cx="1284.0" cy="461.6" r=".7"/><circle cx="1285.5" cy="464.3" r=".7"/><circle cx="1284.0" cy="467.0" r=".7"/></g>
<circle cx="1291.700" cy="455" r="3.700" fill="#4f8d96"/>
<path d="M1315.500 438.500l14.600 14.800-14.600 13.500z" fill="#ffffff"/>
<rect x="1329.3" y="458.0" width="9.9" height="9.8" fill="#f4f4f4" rx="0.8" /><circle cx="1334.300" cy="462.900" r="3.100" fill="#8a8a8a"/>
<text x="1343.0" y="457.0" font-size="12.5" fill="#8c8c8c" textLength="38.0" lengthAdjust="spacingAndGlyphs" stroke="#8c8c8c" stroke-width="0.35" >Gruppe</text>
<rect x="1453.0" y="437.0" width="1.2" height="31.0" fill="#1e1e1e" />
<path d="M1463.4 452.2c2-3.100 4.200-4.400 6.400-4.400s4.400 1.300 6.400 4.400c-2 3.100-4.200 4.400-6.400 4.400s-4.400-1.300-6.400-4.400z" fill="#f4f4f4"/><circle cx="1469.8" cy="452.2" r="2.600" fill="#353535"/><circle cx="1469.8" cy="452.2" r="1.200" fill="#f4f4f4"/>
<rect x="1252.0" y="469.0" width="235.0" height="31.0" fill="#353535" />
<rect x="1275.2" y="469.0" width="31.8" height="31.0" fill="#303030" />
<g fill="none" stroke="#c8c8c8" stroke-width="1.100"><path d="M1269.5 479.8c-2.600 2.400-2.600 7.600 0 10"/><path d="M1264.2 482.3c1.500 1.500 1.500 3.500 0 5"/><path d="M1265.2 484.8h2.500"/></g>
<path d="M1283.800 470.5l14.700 14.300-14.700 14.200z" fill="#dfa5b9"/>
<text x="1311.2" y="489.2" font-size="12.5" fill="#8c8c8c" textLength="41.4" lengthAdjust="spacingAndGlyphs" stroke="#8c8c8c" stroke-width="0.35" >Polylinie</text>
<rect x="1453.0" y="469.0" width="1.2" height="31.0" fill="#1e1e1e" />
<path d="M1463.4 484.6c2-3.100 4.200-4.400 6.400-4.400s4.400 1.300 6.400 4.400c-2 3.100-4.200 4.400-6.400 4.400s-4.400-1.300-6.400-4.400z" fill="#f4f4f4"/><circle cx="1469.8" cy="484.6" r="2.600" fill="#353535"/><circle cx="1469.8" cy="484.6" r="1.200" fill="#f4f4f4"/>
<rect x="1243.7" y="501.0" width="24.0" height="31.0" fill="#303030" />
<rect x="1298.5" y="501.0" width="188.5" height="31.0" fill="#18222a" />
<rect x="1267.7" y="501.0" width="30.8" height="31.0" fill="#2c2c2c" />
<rect x="1256.300" y="505.5" width="7.500" height="1.300" fill="#3a78e0"/><rect x="1256.300" y="508.1" width="7.500" height="1.300" fill="#3a78e0"/><rect x="1256.300" y="510.7" width="7.500" height="1.300" fill="#3a78e0"/><rect x="1256.300" y="513.3" width="7.500" height="1.300" fill="#3a78e0"/>
<path d="M1256.200 521.300l3.600 3.600 3.600-3.600" fill="none" stroke="#b8b8b8" stroke-width="1.200"/>
<path d="M1275.200 502.5l15.800 14.200-15.800 14.200z" fill="#d98a4e"/>
<text x="1303.0" y="521.8" font-size="12.5" fill="#ffffff" textLength="36.6" lengthAdjust="spacingAndGlyphs" stroke="#ffffff" stroke-width="0.35" >Layer 4</text>
<rect x="1453.0" y="501.0" width="1.2" height="31.0" fill="#1e1e1e" />
<path d="M1463.4 516.8c2-3.100 4.200-4.400 6.400-4.400s4.400 1.300 6.400 4.400c-2 3.100-4.200 4.400-6.400 4.400s-4.400-1.300-6.400-4.400z" fill="#f4f4f4"/><circle cx="1469.8" cy="516.8" r="2.600" fill="#353535"/><circle cx="1469.8" cy="516.8" r="1.200" fill="#f4f4f4"/>
<rect x="1252.0" y="533.0" width="235.0" height="31.0" fill="#353535" />
<rect x="1275.2" y="533.0" width="31.8" height="31.0" fill="#303030" />
<g fill="none" stroke="#c8c8c8" stroke-width="1.100"><path d="M1269.5 543.8c-2.600 2.400-2.600 7.600 0 10"/><path d="M1264.2 546.3c1.500 1.500 1.500 3.500 0 5"/><path d="M1265.2 548.8h2.500"/></g>
<path d="M1283.800 534.5l14.700 14.300-14.700 14.200z" fill="#d98a4e"/>
<text x="1311.2" y="553.4" font-size="12.5" fill="#8c8c8c" textLength="41.4" lengthAdjust="spacingAndGlyphs" stroke="#8c8c8c" stroke-width="0.35" >Polylinie</text>
<rect x="1453.0" y="533.0" width="1.2" height="31.0" fill="#1e1e1e" />
<path d="M1463.4 548.6c2-3.100 4.200-4.400 6.400-4.400s4.400 1.300 6.400 4.400c-2 3.100-4.200 4.400-6.400 4.400s-4.400-1.300-6.400-4.400z" fill="#f4f4f4"/><circle cx="1469.8" cy="548.6" r="2.600" fill="#353535"/><circle cx="1469.8" cy="548.6" r="1.200" fill="#f4f4f4"/>
<rect x="1243.7" y="565.0" width="243.3" height="32.0" fill="#353535" />
<rect x="1267.7" y="565.0" width="30.8" height="32.0" fill="#2c2c2c" />
<rect x="1256.300" y="570.2" width="7.500" height="1.300" fill="#3a78e0"/><rect x="1256.300" y="572.8" width="7.500" height="1.300" fill="#3a78e0"/><rect x="1256.300" y="575.4" width="7.500" height="1.300" fill="#3a78e0"/><rect x="1256.300" y="578.0" width="7.500" height="1.300" fill="#3a78e0"/>
<path d="M1258 582.900l3.600 3.600-3.600 3.600" fill="none" stroke="#c4c4c4" stroke-width="1.200"/>
<rect x="1273.5" y="565.0" width="19.9" height="32.0" fill="#4f8d96" />
<text x="1303.0" y="585.8" font-size="12.5" fill="#ffffff" textLength="36.6" lengthAdjust="spacingAndGlyphs" stroke="#ffffff" stroke-width="0.35" >Layer 3</text>
<rect x="1453.0" y="565.0" width="1.2" height="32.0" fill="#1e1e1e" />
<path d="M1463.4 580.8c2-3.100 4.200-4.400 6.400-4.400s4.400 1.300 6.400 4.400c-2 3.100-4.200 4.400-6.400 4.400s-4.400-1.300-6.400-4.400z" fill="#f4f4f4"/><circle cx="1469.8" cy="580.8" r="2.600" fill="#353535"/><circle cx="1469.8" cy="580.8" r="1.200" fill="#f4f4f4"/>
<rect x="1487.0" y="436.5" width="13.0" height="160.5" fill="#2a2a2a" />
<rect x="1495.3" y="539.6" width="3.5" height="30.8" fill="#c0c0c0" rx="1.7" />
<rect x="1243.0" y="596.5" width="257.0" height="28.0" fill="#3a3a3a" />
<g fill="none" stroke="#ececec" stroke-width="1.300" stroke-linejoin="round"><path d="M1261 602.800h-7.300a1.500 1.500 0 0 0-1.500 1.500v11a1.500 1.500 0 0 0 1.500 1.500h10.500a1.500 1.500 0 0 0 1.500-1.500v-7"/><path d="M1257.500 611.800l.6-3 7.600-7.600 2.300 2.300-7.600 7.600z"/></g>
<rect x="1307.8" y="602.8" width="14.0" height="14.0" fill="#f0f0f0" rx="1.2" />
<text x="1314.800" y="614" font-size="10.500" font-weight="bold" fill="#2a2a2a" text-anchor="middle" textLength="11.500" lengthAdjust="spacingAndGlyphs">FX</text>
<rect x="1327.6" y="602.8" width="14.4" height="14.0" fill="#f0f0f0" rx="1.2" /><circle cx="1334.800" cy="609.800" r="4.300" fill="#2e2e2e"/>
<path d="M1348.200 602.800h11.300v2.200l-3.600 4.800 3.600 4.800v2.200h-11.300v-2.200l3.600-4.800-3.600-4.800z" fill="#f0f0f0"/>
<circle cx="1373.800" cy="609.800" r="6.400" fill="none" stroke="#ececec" stroke-width="1.300"/><path d="M1378.400 605.300a6.400 6.400 0 0 1-9.100 9.100z" fill="#ececec"/>
<g fill="none" stroke="#ececec" stroke-width="1.300"><rect x="1419" y="603.200" width="13.500" height="13.500" rx="1.500"/></g><circle cx="1424.300" cy="608.300" r="3.300" fill="#ececec"/><rect x="1425" y="609.300" width="5.400" height="5.400" fill="#ececec" stroke="#3a3a3a" stroke-width=".8"/>
<path d="M1439 616.300v-12.300h4.600l1.500 1.800h7v10.500z" fill="none" stroke="#ececec" stroke-width="1.300" stroke-linejoin="round"/>
<g fill="#f0f0f0"><rect x="1457.0" y="602.6" width="2.900" height="2.900"/><rect x="1462.8" y="602.6" width="2.900" height="2.900"/><rect x="1468.6" y="602.6" width="2.900" height="2.900"/><rect x="1459.9" y="605.5" width="2.900" height="2.900"/><rect x="1465.7" y="605.5" width="2.900" height="2.900"/><rect x="1457.0" y="608.4" width="2.900" height="2.900"/><rect x="1462.8" y="608.4" width="2.900" height="2.900"/><rect x="1468.6" y="608.4" width="2.900" height="2.900"/><rect x="1459.9" y="611.3" width="2.900" height="2.900"/><rect x="1465.7" y="611.3" width="2.900" height="2.900"/><rect x="1457.0" y="614.2" width="2.900" height="2.900"/><rect x="1462.8" y="614.2" width="2.900" height="2.900"/><rect x="1468.6" y="614.2" width="2.900" height="2.900"/></g>
<g fill="none" stroke="#ececec" stroke-width="1.300"><path d="M1478.500 605.200h13M1482.500 605v-1.800h5v1.800M1480.200 605.500l.7 10.300a1.300 1.300 0 0 0 1.300 1.200h5.600a1.300 1.300 0 0 0 1.300-1.200l.7-10.300M1483.500 608v6.200M1486.500 608v6.200"/></g>
<rect x="1243.0" y="624.5" width="257.0" height="2.0" fill="#202020" />
<rect x="1243.0" y="626.5" width="257.0" height="29.5" fill="#232323" />
<rect x="1250.2" y="632.3" width="3.6" height="17.9" fill="#3c3c3c" rx="1.8" />
<text x="1266.3" y="645.0" font-size="12.5" fill="#cdcdcd" textLength="13.7" lengthAdjust="spacingAndGlyphs" stroke="#cdcdcd" stroke-width="0.35" >Tra</text>
<text x="1289.6" y="645.0" font-size="12.5" fill="#cdcdcd" textLength="19.0" lengthAdjust="spacingAndGlyphs" stroke="#cdcdcd" stroke-width="0.35" >Nav</text>
<text x="1318.0" y="645.0" font-size="12.5" fill="#cdcdcd" textLength="16.0" lengthAdjust="spacingAndGlyphs" stroke="#cdcdcd" stroke-width="0.35" >Pro</text>
<rect x="1340.2" y="630.8" width="57.8" height="19.4" fill="#3b3b3b" rx="5" />
<text x="1344.0" y="645.0" font-size="12.5" fill="#ffffff" textLength="50.0" lengthAdjust="spacingAndGlyphs" stroke="#ffffff" stroke-width="0.35" >Typografie</text>
<rect x="1482.3" y="633.8" width="15.3" height="15.2" fill="none" rx="3" stroke="#b4b4b4" stroke-width="1.2" /><path d="M1485.9 638.8l4 5.600 4-5.600" fill="none" stroke="#fff" stroke-width="1.500" stroke-linejoin="round"/>
<rect x="1243.0" y="656.0" width="257.0" height="28.8" fill="#404040" />
<rect x="1249.0" y="665.0" width="11.7" height="10.8" fill="#252525" rx="1.5" />
<text x="1265.6" y="674.6" font-size="12.5" fill="#cacaca" textLength="150.7" lengthAdjust="spacingAndGlyphs" stroke="#cacaca" stroke-width="0.35" >Irrelevante Features ausblenden</text>
<rect x="1243.0" y="684.8" width="257.0" height="74.2" fill="#2f2f2f" />
<rect x="1248.3" y="689.5" width="235.4" height="29.1" fill="#3c3c3c" rx="2" />
<path d="M1255.300 702.800l3.300 3.300 3.300-3.300" fill="none" stroke="#f0f0f0" stroke-width="1.300"/>
<text x="1269.6" y="708.2" font-size="12.5" fill="#ffffff" textLength="32.7" lengthAdjust="spacingAndGlyphs" stroke="#ffffff" stroke-width="0.35" >Ligatur</text>
<rect x="1248.3" y="718.6" width="235.4" height="28.4" fill="#4a4a4a" />
<rect x="1268.5" y="725.0" width="11.5" height="10.8" fill="#4a6272" rx="1.5" />
<path d="M1270.800 730.400l2.400 2.400 4.300-4.800" fill="none" stroke="#fff" stroke-width="1.500"/>
<text x="1285.0" y="734.2" font-size="11.5" fill="#d6d6d6" textLength="83.4" lengthAdjust="spacingAndGlyphs" stroke="#d6d6d6" stroke-width="0.35" font-style="italic" >Standardligaturen</text>
<text x="1434.8" y="738.2" font-size="19" fill="#ffffff" textLength="14.4" lengthAdjust="spacingAndGlyphs" stroke="#ffffff" stroke-width="0.35" >ffi</text>
<rect x="1248.3" y="752.0" width="235.4" height="7.0" fill="#3c3c3c" rx="2" />
<rect x="1495.0" y="702.4" width="4.0" height="8.9" fill="#8c8c8c" rx="2" />
</svg>

</body>
</html>
